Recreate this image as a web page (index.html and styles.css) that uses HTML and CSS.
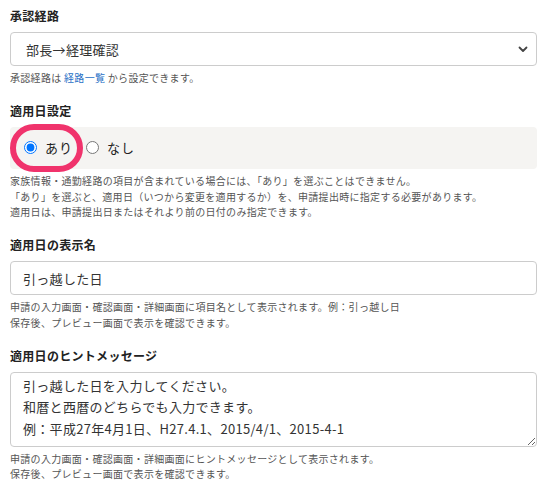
FILE: index.html
```html
<!DOCTYPE html>
<html lang="ja">
<head>
  <meta charset="UTF-8">
  <title>適用日設定</title>
  <link rel="stylesheet" href="styles.css">
</head>
<body>
  <div class="form">
    <div class="field">
      <label class="field-label">承認経路</label>
      <div class="select-wrap">
        <select class="select">
          <option>部長→経理確認</option>
        </select>
        <svg class="select-arrow" width="10" height="7" viewBox="0 0 10 7">
          <path d="M1.5 1.5 L5 5 L8.5 1.5" fill="none" stroke="#444" stroke-width="1.8" stroke-linecap="round" stroke-linejoin="round"/>
        </svg>
      </div>
      <p class="help">承認経路は <a href="#" class="link">経路一覧</a> から設定できます。</p>
    </div>

    <div class="field">
      <label class="field-label">適用日設定</label>
      <div class="radio-box">
        <label class="radio-item highlighted">
          <input type="radio" name="apply" checked>
          <span>あり</span>
        </label>
        <label class="radio-item">
          <input type="radio" name="apply">
          <span>なし</span>
        </label>
      </div>
      <p class="help">
        家族情報・通勤経路の項目が含まれている場合には、「あり」を選ぶことはできません。<br>
        「あり」を選ぶと、適用日（いつから変更を適用するか）を、申請提出時に指定する必要があります。<br>
        適用日は、申請提出日またはそれより前の日付のみ指定できます。
      </p>
    </div>

    <div class="field">
      <label class="field-label">適用日の表示名</label>
      <input class="text-input" type="text" value="引っ越した日">
      <p class="help">
        申請の入力画面・確認画面・詳細画面に項目名として表示されます。例：引っ越し日<br>
        保存後、プレビュー画面で表示を確認できます。
      </p>
    </div>

    <div class="field">
      <label class="field-label">適用日のヒントメッセージ</label>
      <textarea class="textarea" rows="3">引っ越した日を入力してください。
和暦と西暦のどちらでも入力できます。
例：平成27年4月1日、H27.4.1、2015/4/1、2015-4-1</textarea>
      <p class="help">
        申請の入力画面・確認画面・詳細画面にヒントメッセージとして表示されます。<br>
        保存後、プレビュー画面で表示を確認できます。
      </p>
    </div>
  </div>
</body>
</html>
```

FILE: styles.css
```css
body {
  margin: 0;
  padding: 0;
  background-color: #fff;
  color: #222;
  font-family: "Noto Sans CJK JP", "Noto Sans", sans-serif;
}
.form {
  padding: 7px 9px 0 10px;
}
.field {
  margin-bottom: 16px;
}
.field-label {
  display: block;
  font-size: 12px;
  font-weight: bold;
  line-height: 18px;
  letter-spacing: 0.3px;
  color: #222;
  margin-bottom: 7px;
}
.select-wrap {
  position: relative;
}
.select {
  display: block;
  width: 100%;
  height: 34px;
  box-sizing: border-box;
  padding: 0 30px 0 15px;
  border: 1px solid #ccc;
  border-radius: 4px;
  background-color: #fff;
  font-family: inherit;
  font-size: 13px;
  letter-spacing: 0.3px;
  color: #333;
  appearance: none;
  -webkit-appearance: none;
}
.select-arrow {
  position: absolute;
  right: 9px;
  top: 14px;
  pointer-events: none;
}
.help {
  margin: 4px 0 0;
  font-size: 10px;
  line-height: 15.75px;
  letter-spacing: 0.3px;
  color: #555;
}
.link {
  color: #1f6fc5;
  text-decoration: none;
}
.radio-box {
  display: flex;
  align-items: center;
  gap: 13px;
  height: 42px;
  padding: 0 14px;
  background-color: #f5f4f2;
  border-radius: 4px;
}
.radio-item {
  position: relative;
  display: flex;
  align-items: center;
  gap: 8px;
  font-size: 13px;
  letter-spacing: 1px;
  color: #222;
}
.radio-item input {
  margin: 0;
  width: 13px;
  height: 13px;
}
.highlighted::after {
  content: "";
  position: absolute;
  left: -14px;
  top: 50%;
  margin-top: -24px;
  width: 61px;
  height: 36px;
  border: 6px solid #f0336c;
  border-radius: 24px;
}
.text-input {
  display: block;
  width: 100%;
  height: 34px;
  box-sizing: border-box;
  padding: 0 12px;
  border: 1px solid #ccc;
  border-radius: 4px;
  font-family: inherit;
  font-size: 13px;
  letter-spacing: 0.3px;
  color: #333;
}
.textarea {
  display: block;
  width: 100%;
  height: 75px;
  box-sizing: border-box;
  padding: 2px 12px;
  margin-bottom: 3px;
  border: 1px solid #ccc;
  border-radius: 4px;
  font-family: inherit;
  font-size: 13px;
  line-height: 21.5px;
  letter-spacing: 0.3px;
  color: #333;
  resize: vertical;
}
```
